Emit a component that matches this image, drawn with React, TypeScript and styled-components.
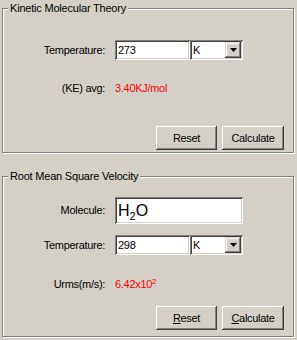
import React from 'react';
import styled, { createGlobalStyle } from 'styled-components';

const GlobalStyle = createGlobalStyle`
  html, body { margin: 0; padding: 0; background: #d4d0c8; }
  body {
    font-family: "Liberation Sans", Arial, sans-serif;
    font-size: 11px;
    color: #000;
  }
`;

const Page = styled.div`
  width: 297px;
  height: 340px;
  box-sizing: border-box;
  padding: 8px 3px 0 2px;
  display: flex;
  flex-direction: column;
  gap: 23px;
  letter-spacing: -0.3px;
`;

const GroupBox = styled.div<{ $h: number; $pt: number }>`
  position: relative;
  box-sizing: border-box;
  height: ${(p) => p.$h}px;
  border: 1px solid #808080;
  box-shadow: inset 1px 1px #fff, 1px 1px #fff;
  padding: ${(p) => p.$pt}px 9px 0 0;
  display: flex;
  flex-direction: column;
`;

const Title = styled.div`
  position: absolute;
  top: -7px;
  left: 5px;
  padding: 0 2px;
  line-height: 13px;
  background: #d4d0c8;
  letter-spacing: -0.2px;
`;

const Form = styled.div<{ $gaps: number[]; $rows: number[] }>`
  display: grid;
  grid-template-columns: 102px auto;
  column-gap: 10px;
  grid-template-rows: ${(p) => p.$rows.map((r) => `${r}px`).join(' ')};
  align-items: center;
  ${(p) => `row-gap: 0;`}
`;

const Label = styled.div<{ $mt?: number }>`
  text-align: right;
  line-height: 13px;
  margin-top: ${(p) => p.$mt ?? 0}px;
`;

const Cell = styled.div<{ $mt?: number }>`
  display: flex;
  align-items: center;
  margin-top: ${(p) => p.$mt ?? 0}px;
`;

const sunken = `
  box-shadow: inset 1px 1px #808080, inset -1px -1px #fff,
    inset 2px 2px #404040, inset -2px -2px #d4d0c8;
`;

const TextBox = styled.div<{ $w: number; $h: number; $big?: boolean }>`
  box-sizing: border-box;
  width: ${(p) => p.$w}px;
  height: ${(p) => p.$h}px;
  background: #fff;
  ${sunken}
  padding-left: ${(p) => (p.$big ? 3 : 3)}px;
  display: flex;
  align-items: center;
  font-size: ${(p) => (p.$big ? 16 : 11)}px;
  letter-spacing: ${(p) => (p.$big ? 0 : -0.3)}px;
`;

const Select = styled.div`
  box-sizing: border-box;
  width: 53px;
  height: 20px;
  background: #fff;
  ${sunken}
  padding: 2px 2px 2px 3px;
  display: flex;
  align-items: center;
  justify-content: space-between;
`;

const DropButton = styled.div`
  box-sizing: border-box;
  width: 16px;
  height: 16px;
  background: #d4d0c8;
  box-shadow: inset -1px -1px #404040, inset 1px 1px #d4d0c8,
    inset -2px -2px #808080, inset 2px 2px #fff;
  display: flex;
  align-items: center;
  justify-content: center;
`;

const Value = styled.div`
  color: #ff0000;
  line-height: 13px;
`;

const Sup = styled.sup`
  font-size: 8px;
  vertical-align: 4px;
  line-height: 0;
`;

const Sub = styled.sub`
  font-size: 11px;
  vertical-align: -4px;
  line-height: 0;
`;

const ButtonRow = styled.div<{ $mt: number }>`
  display: flex;
  justify-content: flex-end;
  gap: 5px;
  margin-top: ${(p) => p.$mt}px;
`;

const Button = styled.button<{ $w: number }>`
  box-sizing: border-box;
  width: ${(p) => p.$w}px;
  height: 24px;
  border: none;
  padding: 0;
  background: #d4d0c8;
  box-shadow: inset -1px -1px #404040, inset 1px 1px #fff,
    inset -2px -2px #808080, inset 2px 2px #d4d0c8;
  font-family: inherit;
  font-size: 11px;
  letter-spacing: -0.3px;
  color: #000;
`;

const Key = styled.span`
  text-decoration: underline;
`;

function UnitSelect() {
  return (
    <Select>
      <span>K</span>
      <DropButton>
        <svg width="7" height="4" viewBox="0 0 7 4">
          <path d="M0 0h7L3.5 4z" fill="#000" />
        </svg>
      </DropButton>
    </Select>
  );
}

export default function App() {
  return (
    <>
      <GlobalStyle />
      <Page>
        <GroupBox $h={145} $pt={31}>
          <Title>Kinetic Molecular Theory</Title>
          <Form $gaps={[]} $rows={[20, 38]}>
            <Label>Temperature:</Label>
            <Cell>
              <TextBox $w={75} $h={20}>273</TextBox>
              <UnitSelect />
            </Cell>
            <Label $mt={18}>(KE) avg:</Label>
            <Cell $mt={18}>
              <Value>3.40KJ/mol</Value>
            </Cell>
          </Form>
          <ButtonRow $mt={28}>
            <Button $w={61}>Reset</Button>
            <Button $w={62}>Calculate</Button>
          </ButtonRow>
        </GroupBox>
        <GroupBox $h={161} $pt={20}>
          <Title>Root Mean Square Velocity</Title>
          <Form $gaps={[]} $rows={[27, 31, 39]}>
            <Label>Molecule:</Label>
            <Cell>
              <TextBox $w={128} $h={27} $big>
                <span>
                  H<Sub>2</Sub>O
                </span>
              </TextBox>
            </Cell>
            <Label $mt={11}>Temperature:</Label>
            <Cell $mt={11}>
              <TextBox $w={75} $h={20}>298</TextBox>
              <UnitSelect />
            </Cell>
            <Label $mt={19}>Urms(m/s):</Label>
            <Cell $mt={19}>
              <Value>
                6.42x10<Sup>2</Sup>
              </Value>
            </Cell>
          </Form>
          <ButtonRow $mt={12}>
            <Button $w={61}>
              <Key>R</Key>eset
            </Button>
            <Button $w={62}>
              <Key>C</Key>alculate
            </Button>
          </ButtonRow>
        </GroupBox>
      </Page>
    </>
  );
}
